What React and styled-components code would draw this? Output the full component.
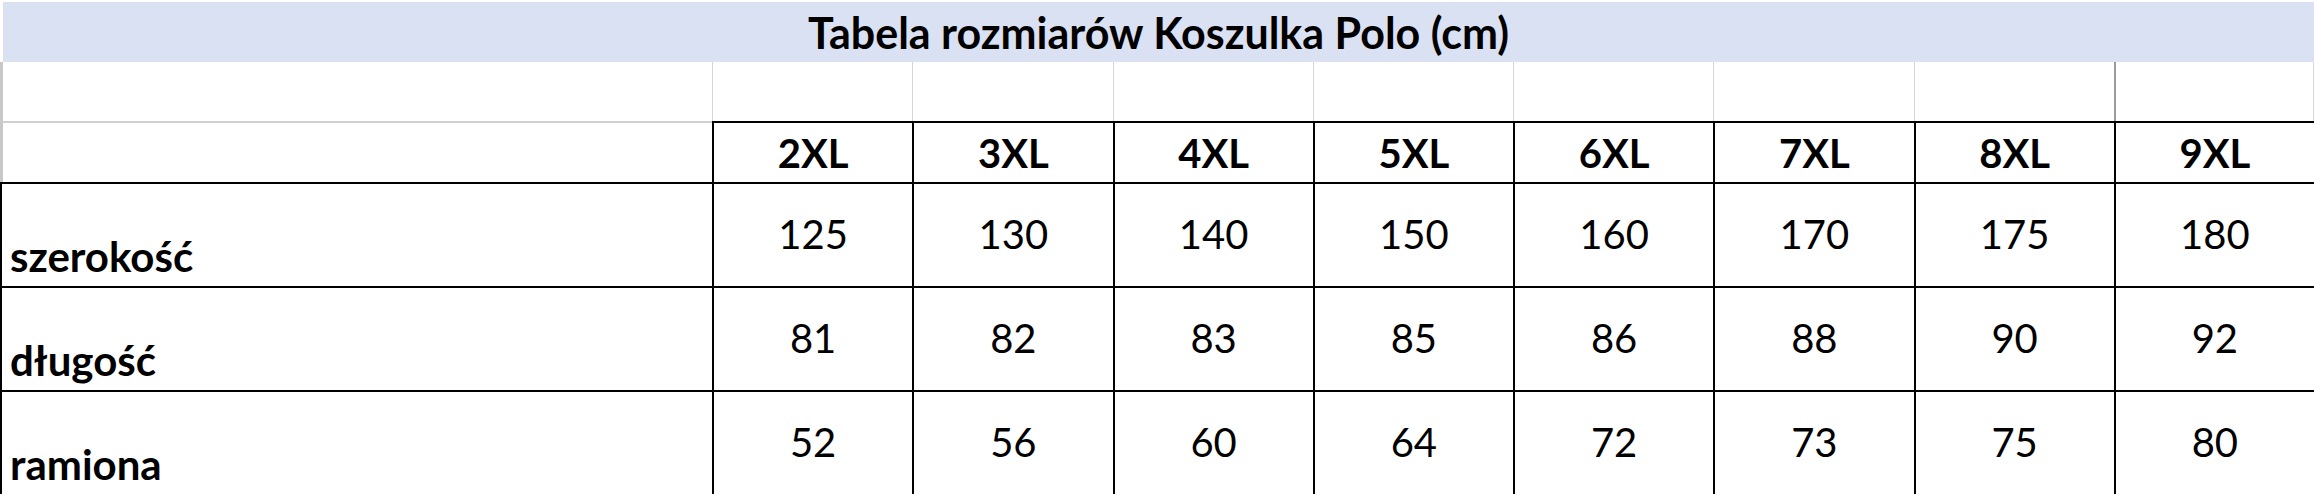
import React from 'react';
import styled, { createGlobalStyle } from 'styled-components';

const Global = createGlobalStyle`
  *, *::before, *::after { box-sizing: border-box; }
  html, body { margin: 0; padding: 0; background: #ffffff; }
  body { font-family: Lato, "Noto Sans", sans-serif; color: #000000; }
`;

const Page = styled.div`
  width: 2314px;
  height: 494px;
  overflow: hidden;
  background: #ffffff;
  display: flex;
  flex-direction: column;
`;

const TitleBar = styled.div`
  margin: 2px 0 0 3px;
  height: 61px;
  background: #d9e1f2;
  display: flex;
  align-items: center;
  justify-content: center;
  font-weight: 700;
  font-size: 43px;
  line-height: 1;
`;

const Grid = styled.div`
  display: grid;
  grid-template-columns: 712px repeat(8, 1fr);
  grid-template-rows: 59px 61px 104px 104px 104px;
`;

const Cell = styled.div`
  display: flex;
  min-width: 0;
`;

const BlankCell = styled(Cell)`
  border-left: ${({ $first, $dark }) =>
    $first ? '3px solid #c8c8c8' : $dark ? '2px solid #9c9c9c' : '1px solid #d6d6d6'};
  border-right: ${({ $last }) => ($last ? '1px solid #d6d6d6' : 'none')};
`;

const CornerCell = styled(Cell)`
  border-left: 3px solid #c8c8c8;
  border-top: 2px solid #d0d0d0;
`;

const SizeCell = styled(Cell)`
  border-left: 2px solid #000000;
  border-top: 2px solid #000000;
  align-items: flex-end;
  justify-content: center;
  padding-bottom: 9px;
  font-weight: 700;
  font-size: 40px;
  line-height: 40px;
`;

const LabelCell = styled(Cell)`
  border-left: 2px solid #000000;
  border-top: 2px solid #000000;
  align-items: flex-end;
  padding: 0 0 9px 8px;
  font-weight: 700;
  font-size: 42px;
  line-height: 42px;
`;

const ValueCell = styled(Cell)`
  border-left: 2px solid #000000;
  border-top: 2px solid #000000;
  align-items: center;
  justify-content: center;
  font-weight: 400;
  font-size: 40px;
  line-height: 40px;
  padding-bottom: 2px;
`;

const sizes = ['2XL', '3XL', '4XL', '5XL', '6XL', '7XL', '8XL', '9XL'];

const rows = [
  { label: 'szerokość', values: [125, 130, 140, 150, 160, 170, 175, 180] },
  { label: 'długość', values: [81, 82, 83, 85, 86, 88, 90, 92] },
  { label: 'ramiona', values: [52, 56, 60, 64, 72, 73, 75, 80] },
];

export default function App() {
  return (
    <>
      <Global />
      <Page>
        <TitleBar>Tabela rozmiarów Koszulka Polo (cm)</TitleBar>
        <Grid>
          <BlankCell $first />
          {sizes.map((s, i) => (
            <BlankCell key={`b${s}`} $dark={i === 7} $last={i === 7} />
          ))}
          <CornerCell />
          {sizes.map((s) => (
            <SizeCell key={s}>{s}</SizeCell>
          ))}
          {rows.map((r) => (
            <React.Fragment key={r.label}>
              <LabelCell>{r.label}</LabelCell>
              {r.values.map((v, i) => (
                <ValueCell key={`${r.label}${i}`}>{v}</ValueCell>
              ))}
            </React.Fragment>
          ))}
        </Grid>
      </Page>
    </>
  );
}
